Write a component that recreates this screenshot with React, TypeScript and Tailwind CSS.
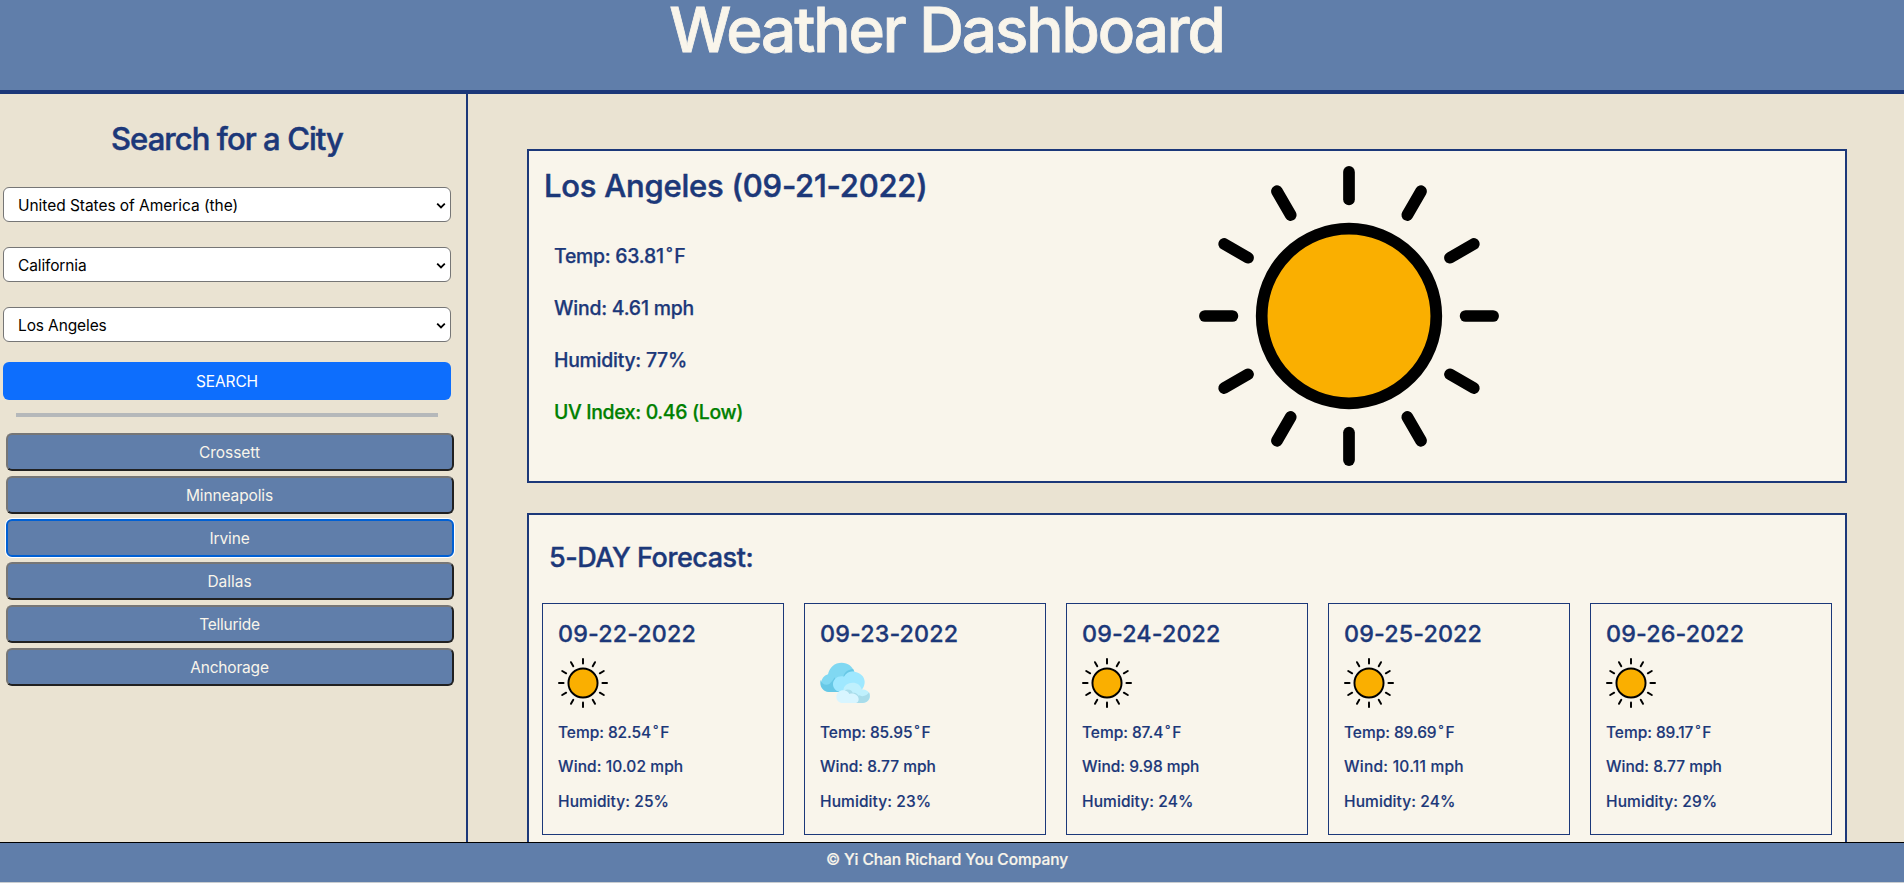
const rays = [0, 30, 60, 90, 120, 150, 180, 210, 240, 270, 300, 330];

function Sun({ className }: { className: string }) {
  return (
    <svg viewBox="0 0 300 300" className={className} aria-hidden="true">
      <circle cx="150" cy="150" r="87.3" fill="#faaf00" stroke="#000" strokeWidth="11.7" />
      {rays.map((a) => (
        <line
          key={a}
          x1="150"
          y1="5.9"
          x2="150"
          y2="33.4"
          stroke="#000"
          strokeWidth="11.7"
          strokeLinecap="round"
          transform={`rotate(${a} 150 150)`}
        />
      ))}
    </svg>
  );
}

function Clouds({ className }: { className: string }) {
  return (
    <svg viewBox="0 0 150 150" className={className} aria-hidden="true">
      <path d="M27 102A27 27 0 0 1 24 49C28 28 44 14 65 14C84 14 98 25 103 42L80 102Z" fill="#80d8f2" />
      <path d="M2 66C5 80 20 84 29 77C36 71 40 64 44 58L60 102H27C10 102 -3 86 2 66Z" fill="#67c8e6" />
      <path d="M103 42C98 38 84 42 78 54L70 56C74 40 86 34 100 34Z" fill="#67c8e6" />
      <path d="M64 102C50 102 39 92 39 79C39 62 56 51 72 56C78 45 90 39 103 41C121 43 134 56 134 71C134 84 126 102 110 102Z" fill="#9fe8ff" />
      <path d="M70 98C70 82 84 74 98 74C112 74 122 82 125 94C140 94 150 103 150 114C150 126 140 135 128 135H90Z" fill="#bff0fd" />
      <path d="M117 112C128 118 143 112 147 103C154 119 144 135 128 135H112Z" fill="#a8dcea" />
      <path d="M74 97C84 92 95 96 98 104C107 103 117 109 119 120L114 135H96Z" fill="#a8dcea" />
      <path d="M68 135C57 135 49 127 49 117C49 104 60 96 72 97C80 98 85 102 88 108C102 103 116 112 116 124C116 130 113 134 108 135Z" fill="#d8f5ff" />
    </svg>
  );
}

function Select({ value, spacing }: { value: string; spacing: string }) {
  return (
    <div className="flex h-[35px] items-center justify-between rounded-[6px] border border-[#767676] bg-white pl-[14px] pr-[4px] text-[15.5px] leading-6 text-black">
      <span className={spacing}>{value}</span>
      <svg viewBox="0 0 10 8" className="h-2 w-2.5" aria-hidden="true">
        <path d="M1.2 1.6L5 5.4L8.8 1.6" fill="none" stroke="#000" strokeWidth="1.8" />
      </svg>
    </div>
  );
}

const cities = [
  { name: "Crossett", spacing: "tracking-[-0.06px]", focused: false },
  { name: "Minneapolis", spacing: "tracking-[-0.13px]", focused: false },
  { name: "Irvine", spacing: "tracking-[-0.12px]", focused: true },
  { name: "Dallas", spacing: "tracking-[-0.03px]", focused: false },
  { name: "Telluride", spacing: "tracking-[-0.28px]", focused: false },
  { name: "Anchorage", spacing: "tracking-[-0.2px]", focused: false },
];

const days = [
  { date: "09-22-2022", icon: "sun", temp: "82.54", wind: "10.02", windSpacing: "tracking-[0.09px]", humidity: 25 },
  { date: "09-23-2022", icon: "clouds", temp: "85.95", wind: "8.77", windSpacing: "tracking-normal", humidity: 23 },
  { date: "09-24-2022", icon: "sun", temp: "87.4", wind: "9.98", windSpacing: "tracking-normal", humidity: 24 },
  { date: "09-25-2022", icon: "sun", temp: "89.69", wind: "10.11", windSpacing: "tracking-[0.24px]", humidity: 24 },
  { date: "09-26-2022", icon: "sun", temp: "89.17", wind: "8.77", windSpacing: "tracking-normal", humidity: 29 },
];

export default function App() {
  return (
    <div className="flex h-[883px] w-full flex-col overflow-hidden bg-[#eae3d2] font-[Inter,sans-serif] text-[#1c3879]">
      <header className="flex h-[94px] shrink-0 justify-center border-b-4 border-[#1c3879] bg-[#607eaa] pr-[11px] text-[#f9f5eb]">
        <h1 className="whitespace-nowrap text-[62px] font-medium leading-[60px] tracking-[-2.08px] [-webkit-text-stroke:0.8px]">Weather Dashboard</h1>
      </header>

      <div className="flex min-h-0 flex-1">
        <aside className="w-[468px] shrink-0 border-r-2 border-[#1c3879]">
          <div className="ml-[3px] w-[448px]">
            <h2 className="pt-[26px] text-center text-[31px] font-medium leading-[38px] tracking-[-0.92px] [-webkit-text-stroke:0.5px]">Search for a City</h2>
            <div className="mt-[29px] flex flex-col gap-[25px] *:pt-0.5">
              <Select value="United States of America (the)" spacing="tracking-[-0.05px]" />
              <Select value="California" spacing="tracking-[-0.13px]" />
              <Select value="Los Angeles" spacing="tracking-[-0.12px]" />
            </div>
            <button className="mt-5 block h-[38px] w-full rounded-[6px] bg-[#0d6efd] pt-0.5 text-[15.5px] tracking-[-0.12px] text-white">SEARCH</button>
            <hr className="mx-[13px] mt-[13px] h-1 border-0 bg-[#b5b8ba]" />
          </div>
          <div className="ml-[6px] mt-4 flex w-[448px] flex-col gap-[5px]">
            {cities.map((city) => (
              <button
                key={city.name}
                className={
                  city.focused
                    ? "h-[38px] rounded-[6px] border-2 border-[#0060d4] bg-[#607eaa] pr-px pt-0.5 text-[15.5px] text-[#f9f5eb] shadow-[0_0_0_1px_#fff]"
                    : "h-[38px] rounded-[6px] border-2 border-b-[#212121] border-l-[#767676] border-r-[#212121] border-t-[#767676] bg-[#607eaa] pr-px pt-0.5 text-[15.5px] text-[#f9f5eb]"
                }
              >
                <span className={city.spacing}>{city.name}</span>
              </button>
            ))}
          </div>
        </aside>

        <main className="flex min-w-0 flex-1 flex-col gap-[30px] pl-[59px] pr-[57px] pt-[55px]">
          <section className="flex h-[334px] shrink-0 border-2 border-[#1c3879] bg-[#f9f5eb]">
            <div className="w-[656px] pl-[15px] pt-4">
              <h2 className="text-[31px] font-medium leading-[38px] tracking-[-0.22px] [-webkit-text-stroke:0.5px]">Los Angeles (09-21-2022)</h2>
              <div className="ml-[10px] mt-[39px] flex flex-col gap-7 text-[19.4px] font-medium leading-6 [-webkit-text-stroke:0.25px]">
                <p className="tracking-[-0.24px]">Temp: 63.81<span className="ml-[2.5px] mr-[2px]">˚</span>F</p>
                <p className="tracking-[-0.2px]">Wind: 4.61 mph</p>
                <p className="tracking-[-0.24px]">Humidity: 77%</p>
                <p className="tracking-[-0.34px] text-[#008000]">UV Index: 0.46 (Low)</p>
              </div>
            </div>
            <Sun className="ml-[14px] mt-[15px] size-[300px]" />
          </section>

          <section className="h-[400px] shrink-0 border-2 border-[#1c3879] bg-[#f9f5eb] px-[13px]">
            <h3 className="ml-[7px] mt-[26px] text-[27px] font-medium leading-[34px] tracking-[-0.45px] [-webkit-text-stroke:0.4px]">5-DAY Forecast:</h3>
            <div className="mt-[28px] flex gap-5">
              {days.map((d) => (
                <article key={d.date} className="h-[232px] w-[242px] shrink-0 border border-[#1c3879] pl-[15px] pt-[15px]">
                  <h4 className="text-[23.3px] font-medium leading-[29px] tracking-[0.13px] [-webkit-text-stroke:0.3px]">{d.date}</h4>
                  {d.icon === "sun" ? <Sun className="mt-[10px] size-[50px]" /> : <Clouds className="mt-[10px] size-[50px]" />}
                  <div className="mt-[15px] flex flex-col gap-[15.4px] text-[15.5px] font-medium leading-[19px] [-webkit-text-stroke:0.15px]">
                    <p className="tracking-[-0.05px]">Temp: {d.temp}<span className="ml-[2px] mr-[2px]">˚</span>F</p>
                    <p className={d.windSpacing}>Wind: {d.wind} mph</p>
                    <p className="tracking-[0.09px]">Humidity: {d.humidity}%</p>
                  </div>
                </article>
              ))}
            </div>
          </section>
        </main>
      </div>

      <footer className="h-[41px] shrink-0 border-b border-t border-b-[#c9cdd0] border-t-black bg-[#607eaa] pr-[10px] pt-[7px] text-center text-[15.5px] font-medium leading-[19px] tracking-[-0.04px] text-[#f9f5eb] [-webkit-text-stroke:0.2px]">
        © Yi Chan Richard You Company
      </footer>
    </div>
  );
}
